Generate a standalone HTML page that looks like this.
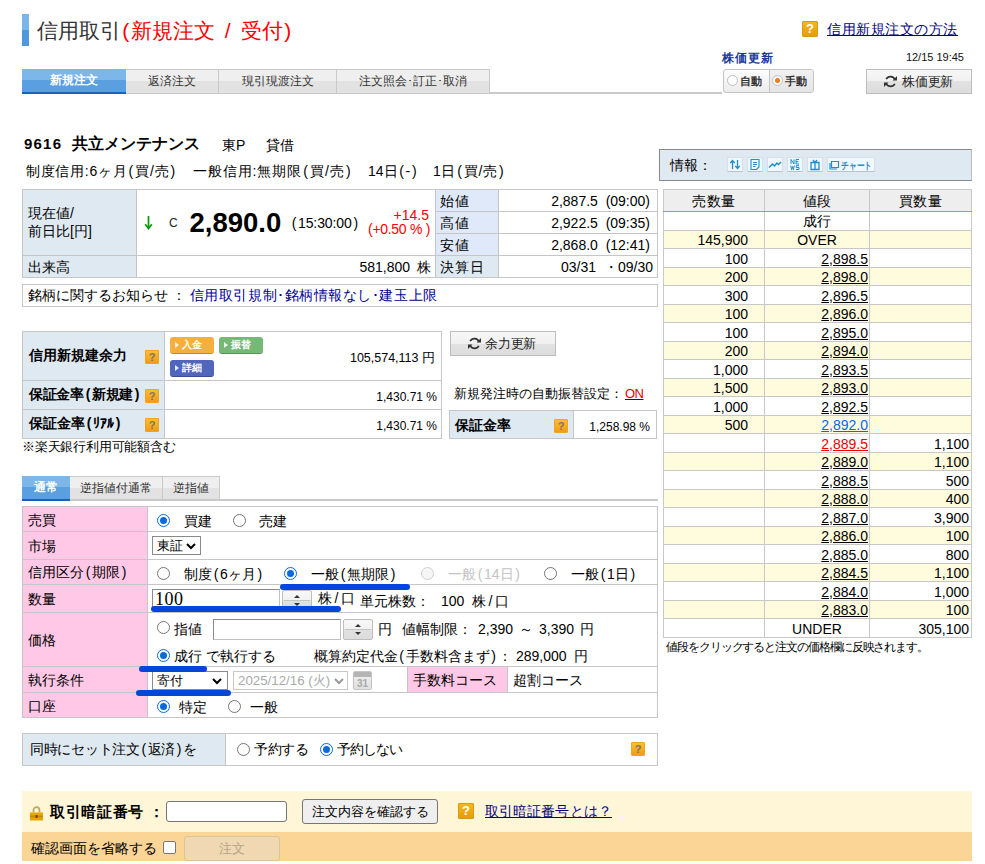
<!DOCTYPE html>
<html lang="ja">
<head>
<meta charset="utf-8">
<title>信用取引(新規注文 / 受付)</title>
<style>
*{box-sizing:border-box;margin:0;padding:0}
html,body{width:985px;height:864px;background:#fff;overflow:hidden}
body{font-family:"Liberation Sans",sans-serif;font-size:14px;color:#000;position:relative}
.abs{position:absolute;white-space:nowrap}
a{color:#000080;text-decoration:underline}
table{border-collapse:collapse;table-layout:fixed}
td,th{border:1px solid #c6c6c6;font-weight:normal;overflow:hidden;white-space:nowrap}
.p{display:inline-block;width:8px;text-align:center}
.q{display:inline-block;width:14px;height:14px;background:linear-gradient(#fcc02e,#f39a17);border:1px solid #f2a51c;border-radius:1px;color:#7a7468;font-size:11px;font-weight:bold;line-height:12px;text-align:center;font-family:"Liberation Sans",sans-serif}
.lb{background:#dfe9f2}
.lb2{background:#e0e9f9}
.r{text-align:right}
.c{text-align:center}
/* title */
#tbar{left:22px;top:14px;width:7px;height:32px;background:linear-gradient(#7ab6ea 0,#7ab6ea 50%,#4f98dc 50%,#4f98dc 100%)}
#title{left:37px;top:17px;font-size:21px;line-height:28px;color:#333}
#title span{color:#f00}
/* tabs */
.tab{top:69px;height:25px;border:1px solid #c9c9c9;border-left:none;background:linear-gradient(#efefef 0,#efefef 50%,#e2e2e2 50%,#e2e2e2 100%);font-size:12px;line-height:23px;text-align:center;color:#333}
.tab.on{background:linear-gradient(#7db7ea 0,#7db7ea 50%,#5a9fe0 50%,#5a9fe0 100%);border:none;border-bottom:2px solid #1a62b8;color:#fff;font-weight:bold}
/* top right */
#helpq{left:802px;top:21px;width:16px;height:16px;line-height:14px;font-size:13px;color:#fff;background:linear-gradient(#f0b820,#e89c0c);border-color:#d89a10}
#helpl{left:827px;top:20px;font-size:14px;line-height:18px;letter-spacing:.55px}
#kk{left:722px;top:51px;font-size:12px;font-weight:bold;color:#1a3a9c;line-height:14px;letter-spacing:1px}
#dt{left:880px;top:50px;width:84px;text-align:right;font-size:11px;line-height:14px;color:#111}
#rg{left:723px;top:69px;width:91px;height:24px;border:1px solid #c4c4c4;border-radius:3px;background:linear-gradient(#fdfdfd,#ececec);font-size:11px;font-weight:bold;color:#333;line-height:22px;overflow:hidden}
#rg .r2{position:absolute;left:45px;top:0;width:45px;height:22px;background:linear-gradient(#f1f1f1,#e4e4e4);border-left:1px solid #c4c4c4}
.rd{position:absolute;top:5px;width:11px;height:11px;border-radius:50%;border:1px solid #bdbdbd;background:#fff}
.rd.on::after{content:"";position:absolute;left:2px;top:2px;width:5px;height:5px;border-radius:50%;background:#f07a1c}
.gbtn{border:1px solid #bdbdbd;background:linear-gradient(#f7f7f7 0,#f0f0f0 50%,#e2e2e2 50%,#dcdcdc 100%);text-align:center;color:#222}
#upd{left:866px;top:69px;width:106px;height:25px}
/* stock head */
#info{left:659px;top:149px;width:313px;height:32px;border:1px solid #86898c;border-right-color:#b4c0c8;background:#dfe9f1}
.ic{position:absolute;top:7px;height:15px;width:16px;border:1px solid #d6e0e8;border-bottom:1px solid #b8c4cc;background:#f2f7fb}
/* price table */
#pt{left:22px;top:189px;width:635px}
#pt td{height:22px;font-size:14px;line-height:18px;padding:0 5px}
#news{left:22px;top:284px;width:636px;height:23px;border:1px solid #c6c6c6;font-size:14px;line-height:21px;padding-left:5px}
#news span{color:#000090;letter-spacing:.55px}

/* power table */
#pw{left:22px;top:331px;width:419px}
#pw td{font-size:12px;padding:0 6px}
#pw td.lb{font-weight:bold;font-size:14px;position:relative}
#pw .q{position:absolute;left:122px}
.sb{position:absolute;width:44px;height:17px;border-radius:3px;color:#fff;font-size:10px;line-height:16px;padding-left:5px;font-weight:bold;border-bottom:1px solid rgba(0,0,0,.22)}
.sb i{display:inline-block;border:3px solid transparent;border-left:4px solid rgba(255,255,255,.85);border-right:none;margin-right:3px;position:relative;top:0}
#yb{left:450px;top:331px;width:106px;height:25px}
#auto{left:454px;top:385px;font-size:13px;line-height:18px}
#auto a{color:#e00;text-decoration-color:#00c}
#hs{left:449px;top:410px;width:207px}
#hs td{height:28px;font-size:12px;padding:0 6px;position:relative}
#note{left:22px;top:438px;font-size:13px;line-height:18px;letter-spacing:-.2px}
/* tabs2 */
.tab2{top:476px;height:24px;border:1px solid #c9c9c9;border-left:none;border-bottom:none;background:linear-gradient(#efefef 0,#efefef 50%,#e2e2e2 50%,#e2e2e2 100%);font-size:12px;line-height:23px;text-align:center;color:#333}
.tab2.on{background:linear-gradient(#7db7ea 0,#7db7ea 50%,#5a9fe0 50%,#5a9fe0 100%);border:none;height:25px;border-bottom:2px solid #1a62b8;color:#fff;font-weight:bold}
/* form */
#fm{left:22px;top:506px;width:635px}
#fm td{font-size:14px;padding:0 5px;line-height:18px}
.pk{background:#ffc8e6}
.t{position:absolute;font-size:14px;line-height:18px;white-space:nowrap}
.rb{position:absolute;width:13px;height:13px;border-radius:50%;border:1px solid #767676;background:#fff}
.rb.on{border:1.5px solid #0a6ad8}
.rb.on::after{content:"";position:absolute;left:1.5px;top:1.5px;width:7px;height:7px;border-radius:50%;background:#0a6ad8}
.rb.dis{border-color:#cfcfcf;background:#f6f6f6}
.sel{position:absolute;border:1px solid #8a8a8a;border-radius:0;background:#fff;height:19px;line-height:17px;font-size:13.3px;padding-left:4px}
.sel svg{position:absolute;top:6px}
.sel.dis{border-color:#c8c8c8;color:#aaa}
.inp{position:absolute;border:1px solid #8a8a8a;border-bottom-color:#c0c0c0;border-right-color:#c0c0c0;background:#fff}
.spin{position:absolute;width:30px;height:21px;border:1px solid #bdbdbd;border-radius:2px;background:linear-gradient(#f8f8f8 0,#f1f1f1 50%,#e1e1e1 50%,#dcdcdc 100%)}
.spin::before{content:"";position:absolute;left:10.5px;top:4px;border:3.5px solid transparent;border-top:none;border-bottom:3.5px solid #333}
.spin::after{content:"";position:absolute;left:10.5px;bottom:4px;border:3.5px solid transparent;border-bottom:none;border-top:3.5px solid #333}
.spin i{position:absolute;left:1px;right:1px;top:9px;height:1px;background:#c4c4c4}
.bl{position:absolute;height:6px;border-radius:3px;background:#0446dc}
/* order book */
#ob{left:663px;top:189px;width:308px}
#ob td,#ob th{height:18.5px;font-size:14px;line-height:15px;padding:2px 4px 0;border-color:#c8c8c8}
#ob th{height:21.5px;background:#eee;font-size:14px;line-height:18px;padding-top:1px;border-bottom-color:#8a9ad0;text-align:center;letter-spacing:.5px}
#ob tr.f td{height:19.25px}
#ob tr.y td{background:#fffbdd}
#ob a{color:#000}
#obn{left:666px;top:639px;font-size:12px;line-height:16px;letter-spacing:-1.08px}
/* set order */
#so{left:22px;top:733px;width:635px}
#so td{height:32px;font-size:14px;padding:0 7px}
/* pin */
#pin1{left:22px;top:791px;width:950px;height:41px;background:#fff5d7}
#pin2{left:22px;top:832px;width:950px;height:29px;background:#fbd596}
.btn{border:1px solid #767676;border-radius:3px;background:#efefef;font-size:13.3px;text-align:center}
</style>
</head>
<body>
<div class="abs" id="tbar"></div>
<div class="abs" id="title">信用取引<span><b class="p" style="width:9.5px;font-weight:normal">(</b>新規注文<b style="display:inline-block;width:26.5px;text-align:center;font-weight:normal">/</b>受付<b class="p" style="width:9.5px;font-weight:normal">)</b></span></div>

<div class="abs tab on" style="left:22px;width:104px">新規注文</div>
<div class="abs tab" style="left:126px;width:93px">返済注文</div>
<div class="abs tab" style="left:219px;width:118px">現引現渡注文</div>
<div class="abs tab" style="left:337px;width:153px">注文照会･訂正･取消</div>
<div class="abs" style="left:490px;top:92px;width:232px;height:2px;background:#c9c9c9"></div>

<span class="abs q" id="helpq">?</span>
<a class="abs" id="helpl">信用新規注文の方法</a>
<div class="abs" id="kk">株価更新</div>
<div class="abs" id="dt">12/15 19:45</div>
<div class="abs" id="rg"><span class="rd" style="left:3px"></span><span class="abs" style="left:16px;top:0">自動</span><span class="r2"></span><span class="rd on" style="left:48px"></span><span class="abs" style="left:61px;top:0">手動</span></div>
<div class="abs gbtn" id="upd"><svg class="abs" style="left:17px;top:5px" width="13" height="13" viewBox="0 0 13 13"><path d="M11 5A4.8 4.8 0 0 0 2.2 4.2M2 8A4.8 4.8 0 0 0 10.8 8.8" fill="none" stroke="#333" stroke-width="1.7"/><path d="M8.6 5.4H13V1zM4.4 7.6H0V12z" fill="#333"/></svg><span class="abs" style="left:35px;top:0;font-size:13px;line-height:23px;letter-spacing:-.2px;color:#222">株価更新</span></div>

<div class="abs" style="left:24px;top:134px;font-size:15px;line-height:20px;font-weight:bold;letter-spacing:1.2px">9616</div>
<div class="abs" style="left:72px;top:133px;font-size:16px;line-height:22px;font-weight:bold">共立メンテナンス</div>
<div class="abs" style="left:222px;top:135px;font-size:14px;line-height:20px">東P</div>
<div class="abs" style="left:266px;top:135px;font-size:14px;line-height:20px">貸借</div>
<div class="abs" style="left:26px;top:162px;font-size:14px;line-height:18px;letter-spacing:.7px">制度信用:6ヶ月<span class="p">(</span>買/売<span class="p">)</span></div>
<div class="abs" style="left:193px;top:162px;font-size:14px;line-height:18px;letter-spacing:.9px">一般信用:無期限<span class="p">(</span>買/売<span class="p">)</span></div>
<div class="abs" style="left:368px;top:162px;font-size:14px;line-height:18px">14日<span class="p">(</span>-<span class="p">)</span></div>
<div class="abs" style="left:433px;top:162px;font-size:14px;line-height:18px;letter-spacing:.6px">1日<span class="p">(</span>買/売<span class="p">)</span></div>

<div class="abs" id="info"><span class="abs" style="left:10px;top:0;font-size:14px;line-height:30px">情報：</span>
<span class="ic" style="left:67px"><svg width="14" height="13" viewBox="0 0 14 13"><path d="M4.5 11V3M2.3 5L4.5 2.5 6.7 5M9.5 2v8M7.3 8L9.5 10.5 11.7 8" fill="none" stroke="#1e8fd0" stroke-width="1.3"/></svg></span>
<span class="ic" style="left:87px"><svg width="14" height="13" viewBox="0 0 14 13"><path d="M3 1.5h8v7.5l-2.5 2.5H3zM5 4.5h4M5 6.5h4M5 8.5h2.5" fill="none" stroke="#1e8fd0" stroke-width="1.1"/></svg></span>
<span class="ic" style="left:107px"><svg width="14" height="13" viewBox="0 0 14 13"><path d="M1 9.5L4.5 6l2 2L9 5l1.5 1.5L13 4" fill="none" stroke="#1e8fd0" stroke-width="1.5"/></svg></span>
<span class="ic" style="left:127px"><svg width="14" height="13" viewBox="0 0 14 13"><path d="M3 6V1.5L6 6V1.5M8 1.5h3M8 3.7h2.5M8 6h3M8 1.5V6M2.7 7.5l.9 4.2.9-3.2.9 3.2.9-4.2M11 7.7H8.2v1.8H11v2H8" fill="none" stroke="#1e8fd0" stroke-width="1"/></svg></span>
<span class="ic" style="left:147px"><svg width="14" height="13" viewBox="0 0 14 13"><path d="M3 4.5h8v7H3zM7 4.5v7M5 2l2 2.5L9 2" fill="none" stroke="#1e8fd0" stroke-width="1.3"/></svg></span>
<span class="ic" style="left:167px;width:48px"><svg width="46" height="13" viewBox="0 0 46 13"><path d="M3.5 3.5h7v6h-7zM2 5v6h7" fill="none" stroke="#1e8fd0" stroke-width="1.2"/><text x="13" y="10.5" font-size="9.5" font-weight="bold" fill="#1e8fd0" font-family="Liberation Sans,sans-serif" textLength="31" lengthAdjust="spacingAndGlyphs">チャート</text></svg></span>
</div>

<table class="abs" id="pt">
<colgroup><col style="width:114px"><col style="width:299px"><col style="width:63px"><col style="width:159px"></colgroup>
<tr><td class="lb" rowspan="3" style="line-height:17.5px">現在値/<br>前日比[円]</td><td rowspan="3"></td><td class="lb2" style="padding-left:4px;letter-spacing:1px">始値</td><td class="r" style="padding-right:7px">2,887.5&nbsp; (09:00)</td></tr>
<tr><td class="lb2" style="padding-left:4px;letter-spacing:1px">高値</td><td class="r" style="padding-right:7px">2,922.5&nbsp; (09:35)</td></tr>
<tr><td class="lb2" style="padding-left:4px;letter-spacing:1px">安値</td><td class="r" style="padding-right:7px">2,868.0&nbsp; (12:41)</td></tr>
<tr><td class="lb">出来高</td><td class="r" style="padding-right:4px;word-spacing:3px">581,800 株</td><td class="lb" style="padding-left:4px;letter-spacing:1px">決算日</td><td class="r" style="padding-right:4px;word-spacing:4px">03/31 ・09/30</td></tr>
</table>
<svg class="abs" style="left:144px;top:216px" width="9" height="14" viewBox="0 0 9 14"><path d="M4.5 0v11M1.2 8.2L4.5 12.5 7.8 8.2" fill="none" stroke="#0a9a0a" stroke-width="1.7"/></svg>
<div class="abs" style="left:169px;top:214px;font-size:12px;line-height:18px;color:#222">C</div>
<div class="abs" id="big" style="left:189.5px;top:205px;font-size:27.5px;line-height:36px;font-weight:bold">2,890.0</div>
<div class="abs" style="left:290px;top:214px;font-size:14px;line-height:18px;letter-spacing:-.1px"><span class="p">(</span>15:30:00<span class="p">)</span></div>
<div class="abs" style="left:350px;top:207px;width:79px;text-align:right;font-size:14px;line-height:17px;color:#f00">+14.5</div>
<div class="abs" style="left:350px;top:221px;width:80px;text-align:right;font-size:14px;line-height:17px;color:#f00;letter-spacing:-.3px">(+0.50 % )</div>
<div class="abs" id="news">銘柄に関するお知らせ ： <span>信用取引規制･銘柄情報なし･建玉上限</span></div>
<table class="abs" id="pw">
<colgroup><col style="width:142px"><col style="width:277px"></colgroup>
<tr><td class="lb" style="height:49px">信用新規建余力<span class="q" style="top:18px">?</span></td><td></td></tr>
<tr><td class="lb" style="height:29px"><span style="letter-spacing:-.3px">保証金率<span class="p">(</span>新規建<span class="p">)</span></span><span class="q" style="top:8px">?</span></td><td class="r" style="padding:4px 4px 0 0">1,430.71 %</td></tr>
<tr><td class="lb" style="height:29px">保証金率<span class="p">(</span>ﾘｱﾙ<span class="p">)</span><span class="q" style="top:8px">?</span></td><td class="r" style="padding:4px 4px 0 0">1,430.71 %</td></tr>
</table>
<span class="sb" style="left:170px;top:337px;background:#f5af3c"><i></i>入金</span>
<span class="sb" style="left:219px;top:337px;background:#76b876"><i></i>振替</span>
<span class="sb" style="left:170px;top:360px;background:#5066ba"><i></i>詳細</span>
<div class="abs" style="left:300px;top:349px;width:135px;text-align:right;font-size:12.5px;line-height:18px">105,574,113 円</div>
<div class="abs gbtn" id="yb"><svg class="abs" style="left:17px;top:5px" width="13" height="13" viewBox="0 0 13 13"><path d="M11 5A4.8 4.8 0 0 0 2.2 4.2M2 8A4.8 4.8 0 0 0 10.8 8.8" fill="none" stroke="#333" stroke-width="1.7"/><path d="M8.6 5.4H13V1zM4.4 7.6H0V12z" fill="#333"/></svg><span class="abs" style="left:34px;top:0;font-size:13px;line-height:23px;color:#222;letter-spacing:-.2px">余力更新</span></div>
<div class="abs" id="auto">新規発注時の自動振替設定：</div><div class="abs auto2" style="left:625px;top:385px;font-size:13px;line-height:18px;letter-spacing:-.5px"><a style="color:#e00;text-decoration-color:#00c">ON</a></div>
<table class="abs" id="hs"><colgroup><col style="width:124px"><col style="width:83px"></colgroup>
<tr><td class="lb" style="font-weight:bold;font-size:14px;padding:2px 0 0 5px">保証金率<span class="q" style="position:absolute;left:104px;top:8px">?</span></td><td class="r" style="padding-top:4px">1,258.98 %</td></tr></table>
<div class="abs" id="note">※楽天銀行利用可能額含む</div>

<div class="abs tab2 on" style="left:22px;width:48px">通常</div>
<div class="abs tab2" style="left:70px;width:93px">逆指値付通常</div>
<div class="abs tab2" style="left:163px;width:57px">逆指値</div>
<div class="abs" style="left:70px;top:499px;width:588px;height:2px;background:#c9c9c9"></div>

<table class="abs" id="fm">
<colgroup><col style="width:125px"><col style="width:260px"><col style="width:100px"><col style="width:150px"></colgroup>
<tr><td class="pk" style="height:25px;padding-top:2px">売買</td><td colspan="3"></td></tr>
<tr><td class="pk" style="height:28px">市場</td><td colspan="3"></td></tr>
<tr><td class="pk" style="height:25px">信用区分<span class="p">(</span>期限<span class="p">)</span></td><td colspan="3"></td></tr>
<tr><td class="pk" style="height:28px">数量</td><td colspan="3"></td></tr>
<tr><td class="pk" style="height:54px">価格</td><td colspan="3"></td></tr>
<tr><td class="pk" style="height:26px">執行条件</td><td></td><td class="pk">手数料コース</td><td>超割コース</td></tr>
<tr><td class="pk" style="height:25px;padding-top:2px">口座</td><td colspan="3"></td></tr>
</table>
<!-- row 売買 -->
<span class="rb on" style="left:157px;top:514px"></span><span class="t" style="left:184px;top:512px">買建</span>
<span class="rb" style="left:233px;top:514px"></span><span class="t" style="left:259px;top:512px">売建</span>
<!-- row 市場 -->
<span class="sel" style="left:152px;top:536px;width:49px">東証<svg style="right:4px" width="10" height="7" viewBox="0 0 10 7"><path d="M1 1l4 4 4-4" fill="none" stroke="#000" stroke-width="2"/></svg></span>
<!-- row 信用区分 -->
<span class="rb" style="left:157px;top:567px"></span><span class="t" style="left:184px;top:565px">制度<span class="p">(</span>6ヶ月<span class="p">)</span></span>
<span class="rb on" style="left:284px;top:567px"></span><span class="t" style="left:311px;top:565px">一般<span class="p">(</span>無期限<span class="p">)</span></span>
<span class="rb dis" style="left:421px;top:567px"></span><span class="t" style="left:448px;top:565px;color:#c4c4c4">一般<span class="p">(</span>14日<span class="p">)</span></span>
<span class="rb" style="left:544px;top:567px"></span><span class="t" style="left:571px;top:565px">一般<span class="p">(</span>1日<span class="p">)</span></span>
<!-- row 数量 -->
<span class="inp" style="left:152px;top:589px;width:128px;height:22px"></span><span class="t" style="left:155px;top:590px;font-size:18px;line-height:20px;font-family:'Liberation Serif',serif;letter-spacing:.5px;margin-top:-1px">100</span>
<span class="spin" style="left:282px;top:590px"><i></i></span>
<span class="t" style="left:318px;top:589px;letter-spacing:2.5px">株/口</span><span class="t" style="left:360px;top:592px">単元株数：</span><span class="t" style="left:441px;top:592px">100</span><span class="t" style="left:472px;top:592px;letter-spacing:2.5px">株/口</span>
<!-- row 価格 -->
<span class="rb" style="left:157px;top:621px"></span><span class="t" style="left:174px;top:620px">指値</span>
<span class="inp" style="left:213px;top:619px;width:128px;height:21px"></span>
<span class="spin" style="left:343px;top:619px"><i></i></span>
<span class="t" style="left:378px;top:620px">円</span><span class="t" style="left:402px;top:620px">値幅制限：</span><span class="t" style="left:478px;top:620px">2,390</span><span class="t" style="left:519px;top:620px">～</span><span class="t" style="left:539px;top:620px">3,390</span><span class="t" style="left:579.5px;top:620px">円</span>
<span class="rb on" style="left:157px;top:649px"></span><span class="t" style="left:174px;top:647px">成行 で執行する</span>
<span class="t" style="left:313.5px;top:647px">概算約定代金<span class="p">(</span>手数料含まず<span class="p">)</span>：</span><span class="t" style="left:516px;top:647px">289,000</span><span class="t" style="left:573.5px;top:647px">円</span>
<!-- row 執行条件 -->
<span class="sel" style="left:152px;top:671px;width:76px;height:19px">寄付<svg style="right:5px" width="10" height="7" viewBox="0 0 10 7"><path d="M1 1l4 4 4-4" fill="none" stroke="#000" stroke-width="2"/></svg></span>
<span class="sel dis" style="left:233px;top:671px;width:115px;height:19px">2025/12/16 (火)<svg style="right:3px" width="10" height="7" viewBox="0 0 10 7"><path d="M1 1l4 4 4-4" fill="none" stroke="#999" stroke-width="2"/></svg></span>
<span class="abs" style="left:353px;top:671px;width:19px;height:19px;border-radius:2px;background:linear-gradient(#b4b4b4 0,#b4b4b4 28%,#ececec 28%,#e0e0e0 100%);border:1px solid #c4c4c4;color:#a8a8a8;font-size:10px;font-weight:bold;line-height:24px;text-align:center">31</span>
<!-- row 口座 -->
<span class="rb on" style="left:157px;top:700px"></span><span class="t" style="left:179px;top:698px">特定</span>
<span class="rb" style="left:228px;top:700px"></span><span class="t" style="left:250px;top:698px">一般</span>
<div class="bl" style="left:280px;top:584px;width:130px"></div>
<div class="bl" style="left:151px;top:606px;width:190px"></div>
<div class="bl" style="left:139px;top:666px;width:68px"></div>
<div class="bl" style="left:136px;top:690px;width:95px"></div>
<table class="abs" id="ob"><colgroup><col style="width:101px"><col style="width:105px"><col style="width:102px"></colgroup>
<tr><th>売数量</th><th>値段</th><th>買数量</th></tr>
<tr class="f"><td class="r" style="padding-right:16px"></td><td class="c">成行</td><td class="r" style="padding-right:2px"></td></tr>
<tr class="y"><td class="r" style="padding-right:16px">145,900</td><td class="c">OVER</td><td class="r" style="padding-right:2px"></td></tr>
<tr><td class="r" style="padding-right:16px">100</td><td class="r" style="padding-right:1px"><a>2,898.5</a></td><td class="r" style="padding-right:2px"></td></tr>
<tr class="y"><td class="r" style="padding-right:16px">200</td><td class="r" style="padding-right:1px"><a>2,898.0</a></td><td class="r" style="padding-right:2px"></td></tr>
<tr><td class="r" style="padding-right:16px">300</td><td class="r" style="padding-right:1px"><a>2,896.5</a></td><td class="r" style="padding-right:2px"></td></tr>
<tr class="y"><td class="r" style="padding-right:16px">100</td><td class="r" style="padding-right:1px"><a>2,896.0</a></td><td class="r" style="padding-right:2px"></td></tr>
<tr><td class="r" style="padding-right:16px">100</td><td class="r" style="padding-right:1px"><a>2,895.0</a></td><td class="r" style="padding-right:2px"></td></tr>
<tr class="y"><td class="r" style="padding-right:16px">200</td><td class="r" style="padding-right:1px"><a>2,894.0</a></td><td class="r" style="padding-right:2px"></td></tr>
<tr><td class="r" style="padding-right:16px">1,000</td><td class="r" style="padding-right:1px"><a>2,893.5</a></td><td class="r" style="padding-right:2px"></td></tr>
<tr class="y"><td class="r" style="padding-right:16px">1,500</td><td class="r" style="padding-right:1px"><a>2,893.0</a></td><td class="r" style="padding-right:2px"></td></tr>
<tr><td class="r" style="padding-right:16px">1,000</td><td class="r" style="padding-right:1px"><a>2,892.5</a></td><td class="r" style="padding-right:2px"></td></tr>
<tr class="y"><td class="r" style="padding-right:16px">500</td><td class="r" style="padding-right:1px"><a style="color:#06f">2,892.0</a></td><td class="r" style="padding-right:2px"></td></tr>
<tr><td class="r" style="padding-right:16px"></td><td class="r" style="padding-right:1px"><a style="color:#e00">2,889.5</a></td><td class="r" style="padding-right:2px">1,100</td></tr>
<tr class="y"><td class="r" style="padding-right:16px"></td><td class="r" style="padding-right:1px"><a>2,889.0</a></td><td class="r" style="padding-right:2px">1,100</td></tr>
<tr><td class="r" style="padding-right:16px"></td><td class="r" style="padding-right:1px"><a>2,888.5</a></td><td class="r" style="padding-right:2px">500</td></tr>
<tr class="y"><td class="r" style="padding-right:16px"></td><td class="r" style="padding-right:1px"><a>2,888.0</a></td><td class="r" style="padding-right:2px">400</td></tr>
<tr><td class="r" style="padding-right:16px"></td><td class="r" style="padding-right:1px"><a>2,887.0</a></td><td class="r" style="padding-right:2px">3,900</td></tr>
<tr class="y"><td class="r" style="padding-right:16px"></td><td class="r" style="padding-right:1px"><a>2,886.0</a></td><td class="r" style="padding-right:2px">100</td></tr>
<tr><td class="r" style="padding-right:16px"></td><td class="r" style="padding-right:1px"><a>2,885.0</a></td><td class="r" style="padding-right:2px">800</td></tr>
<tr class="y"><td class="r" style="padding-right:16px"></td><td class="r" style="padding-right:1px"><a>2,884.5</a></td><td class="r" style="padding-right:2px">1,100</td></tr>
<tr><td class="r" style="padding-right:16px"></td><td class="r" style="padding-right:1px"><a>2,884.0</a></td><td class="r" style="padding-right:2px">1,000</td></tr>
<tr class="y"><td class="r" style="padding-right:16px"></td><td class="r" style="padding-right:1px"><a>2,883.0</a></td><td class="r" style="padding-right:2px">100</td></tr>
<tr><td class="r" style="padding-right:16px"></td><td class="c">UNDER</td><td class="r" style="padding-right:2px">305,100</td></tr>
</table>
<div class="abs" id="obn">値段をクリックすると注文の価格欄に反映されます。</div>

<table class="abs" id="so"><colgroup><col style="width:203px"><col style="width:432px"></colgroup>
<tr><td class="lb" style="letter-spacing:-.3px">同時にセット注文<span class="p">(</span>返済<span class="p">)</span>を</td><td></td></tr></table>
<span class="rb" style="left:237px;top:743px"></span><span class="t" style="left:254px;top:740px;letter-spacing:-.3px">予約する</span>
<span class="rb on" style="left:320px;top:743px"></span><span class="t" style="left:337px;top:740px;letter-spacing:-.9px">予約しない</span>
<span class="abs q" style="left:631px;top:742px">?</span>

<div class="abs" id="pin1"></div>
<div class="abs" id="pin2"></div>
<svg class="abs" style="left:30px;top:806px" width="13" height="15" viewBox="0 0 13 15"><path d="M3.5 6.5V4.2a3 3 0 0 1 6 0v2.3" fill="none" stroke="#bca95c" stroke-width="1.7"/><rect x="0" y="6.5" width="13" height="8" fill="#e6a700"/><rect x="0" y="9.5" width="13" height="2" fill="#c98a00"/><rect x="5.5" y="9" width="2" height="3" fill="#6a4800"/></svg>
<div class="abs" style="left:50px;top:802px;font-size:15px;line-height:20px;font-weight:bold;letter-spacing:.7px">取引暗証番号 ：</div>
<div class="abs" style="left:166px;top:801px;width:121px;height:21px;border:1px solid #767676;border-radius:3px;background:#fff"></div>
<div class="abs btn" style="left:302px;top:799px;width:136px;height:25px;line-height:23px">注文内容を確認する</div>
<span class="abs q" style="left:458px;top:803px;width:16px;height:16px;line-height:14px;font-size:13px;color:#fff;background:linear-gradient(#f0b820,#e89c0c);border-color:#d89a10">?</span>
<a class="abs" style="left:485px;top:801px;font-size:14px;line-height:20px;letter-spacing:.1px">取引暗証番号とは？</a>
<div class="abs" style="left:31px;top:839px;font-size:14px;line-height:18px">確認画面を省略する</div>
<div class="abs" style="left:163px;top:841px;width:13px;height:13px;border:1px solid #767676;border-radius:2px;background:#fff"></div>
<div class="abs btn" style="left:184px;top:836px;width:96px;height:25px;line-height:23px;border-color:#dcc49c;background:#efd8b2;color:#b5a58a">注文</div>
</body>
</html>
